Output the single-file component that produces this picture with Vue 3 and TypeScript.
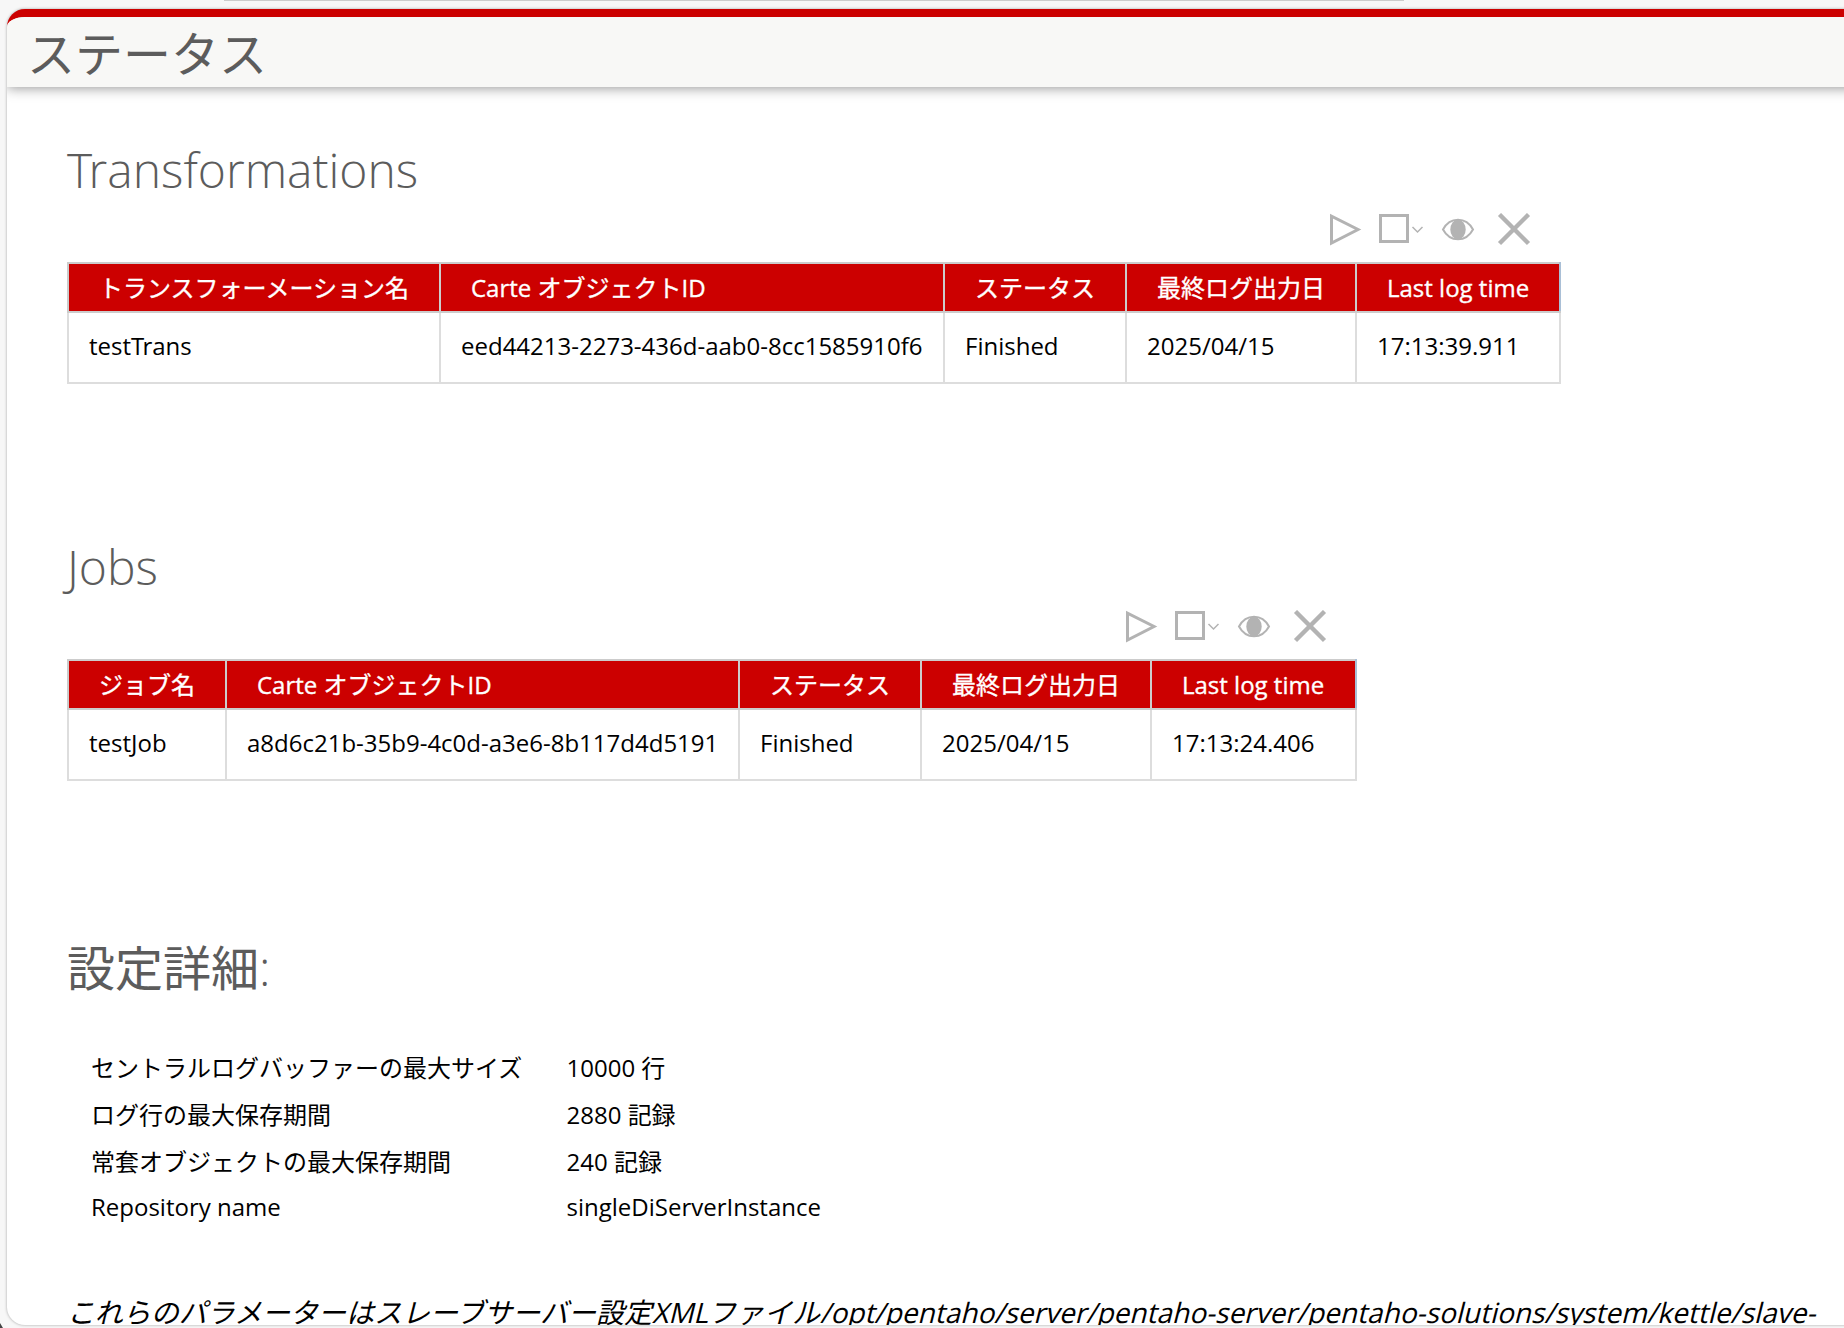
<script setup lang="ts">
interface Section {
  title: string
  widths: number[]
  headers: string[]
  row: string[]
}

const sections: Section[] = [
  {
    title: 'Transformations',
    widths: [372, 504, 182, 230, 204],
    headers: ['トランスフォーメーション名', 'Carte オブジェクトID', 'ステータス', '最終ログ出力日', 'Last log time'],
    row: ['testTrans', 'eed44213-2273-436d-aab0-8cc1585910f6', 'Finished', '2025/04/15', '17:13:39.911'],
  },
  {
    title: 'Jobs',
    widths: [158, 513, 182, 230, 205],
    headers: ['ジョブ名', 'Carte オブジェクトID', 'ステータス', '最終ログ出力日', 'Last log time'],
    row: ['testJob', 'a8d6c21b-35b9-4c0d-a3e6-8b117d4d5191', 'Finished', '2025/04/15', '17:13:24.406'],
  },
]

const settings: [string, string][] = [
  ['セントラルログバッファーの最大サイズ', '10000 行'],
  ['ログ行の最大保存期間', '2880 記録'],
  ['常套オブジェクトの最大保存期間', '240 記録'],
  ['Repository name', 'singleDiServerInstance'],
]

const sum = (values: number[]): number => values.reduce((a, b) => a + b, 0)

// Splits out a "T" that precedes "r" so the pair can be kerned
const kernParts = (text: string): string[] => text.split(/(T(?=r))/).filter(Boolean)
</script>

<template>
  <div class="window">
    <div class="tab-edge"></div>
    <main class="page">
      <header class="banner"><h1>ステータス</h1></header>
      <div class="content">
        <section v-for="s in sections" :key="s.title" class="block">
          <h2><span v-for="(p, i) in kernParts(s.title)" :key="i" :class="{ kern: p === 'T' }">{{ p }}</span></h2>
          <div class="toolbar" :style="{ width: sum(s.widths) + 2 + 'px' }">
            <svg width="202" height="34" viewBox="0 0 202 34" fill="none" stroke="#b3b3b3">
              <path d="M1.5 3.2V30L28 16.5Z" stroke-width="3" />
              <path d="M50.5 2.5H77.5V28.5H50.5Z" stroke-width="3" />
              <path d="M82.5 14L87.5 19L92.5 14" stroke-width="1.5" />
              <path d="M113 16.5C120 3.5 136 3.5 143 16.5C136 29.5 120 29.5 113 16.5Z" stroke-width="2" />
              <ellipse cx="128" cy="16.5" rx="7.7" ry="10" fill="#b3b3b3" stroke="none" />
              <path d="M169.5 1.5L198.5 30.5M198.5 1.5L169.5 30.5" stroke-width="4.4" />
            </svg>
          </div>
          <table :style="{ width: sum(s.widths) + 2 + 'px' }">
            <colgroup><col v-for="(w, i) in s.widths" :key="i" :style="{ width: w + 'px' }" /></colgroup>
            <thead><tr><th v-for="h in s.headers" :key="h">{{ h }}</th></tr></thead>
            <tbody><tr><td v-for="c in s.row" :key="c"><span v-for="(p, i) in kernParts(c)" :key="i" :class="{ kern: p === 'T' }">{{ p }}</span></td></tr></tbody>
          </table>
        </section>
        <section>
          <h2 class="config-title">設定詳細<span class="colon">:</span></h2>
          <dl>
            <template v-for="[k, v] in settings" :key="k"><dt>{{ k }}</dt><dd>{{ v }}</dd></template>
          </dl>
          <p class="note">これらのパラメーターはスレーブサーバー設定XMLファイル/opt/pentaho/server/pentaho-server/pentaho-solutions/system/kettle/slave-</p>
        </section>
      </div>
    </main>
    <div class="corner"></div>
  </div>
</template>

<style>
body { overflow: hidden; }
</style>

<style scoped>
.window {
  position: relative;
  box-sizing: border-box;
  width: 1844px;
  height: 1328px;
  overflow: hidden;
  background: #f7f7f7;
  font-family: "Open Sans", "Noto Sans CJK JP", sans-serif;
  font-size: 24px;
  color: #000;
}
.tab-edge {
  height: 1px;
  width: 1180px;
  margin-left: 224px;
  margin-bottom: 8px;
  background: #ccc;
}
.page {
  box-sizing: border-box;
  width: 1860px;
  height: 1316px;
  margin-left: 7px;
  border-top: 8px solid #c00;
  border-radius: 18px;
  background: #fff;
  overflow: hidden;
  box-shadow: 0 0 3px rgba(0, 0, 0, 0.35);
}
.corner {
  position: absolute;
  left: 0;
  bottom: 0;
  width: 3px;
  height: 5px;
  background: #444;
  clip-path: polygon(0 0, 100% 100%, 0 100%);
}
.banner {
  height: 70px;
  background: #f8f8f6;
  box-shadow: 0 1px 12px rgba(0, 0, 0, 0.42);
}
h1, h2 {
  margin: 0;
  font-size: 48px;
  font-weight: 300;
  color: #5c5c5c;
  white-space: nowrap;
}
h1 {
  padding-left: 20px;
  line-height: 69px;
  font-family: "Noto Sans CJK JP", sans-serif;
  font-weight: 400;
}
.content { padding: 50px 0 0 60px; }
.block { height: 397px; }
h2 { height: 66px; line-height: 66px; }
.kern { letter-spacing: -0.075em; }
.toolbar {
  display: flex;
  justify-content: flex-end;
  box-sizing: border-box;
  height: 59px;
  padding: 10px 29px 0 0;
}
table {
  table-layout: fixed;
  border-collapse: collapse;
}
th, td {
  box-sizing: border-box;
  padding: 0 20px;
  white-space: nowrap;
}
th {
  height: 49px;
  padding: 0 0 0 30px;
  border: 2px solid #ccc;
  background: #c00;
  color: #fff;
  font-weight: 400;
  -webkit-text-stroke: 0.35px #fff;
  line-height: 46px;
  text-align: left;
}
th:last-child { border-right-color: #a9bfd6; }
td {
  height: 71px;
  border: 2px solid #ddd;
  line-height: 64px;
  padding-bottom: 4px;
}
.config-title {
  padding-top: 4px;
  font-family: "Open Sans", "Noto Sans CJK JP", sans-serif;
  font-weight: 400;
}
.colon { font-weight: 300; }
dl {
  display: grid;
  grid-template-columns: 475.5px auto;
  grid-template-rows: 47px 47px 45px 46px;
  margin: 44px 0 0 24px;
  line-height: 46px;
}
dd { margin: 0; }
.note {
  width: max-content;
  margin: 64px 0 0;
  line-height: 36px;
  font-size: 28px;
  white-space: nowrap;
  transform: skewX(-14deg);
  transform-origin: 0 28px;
}
</style>
